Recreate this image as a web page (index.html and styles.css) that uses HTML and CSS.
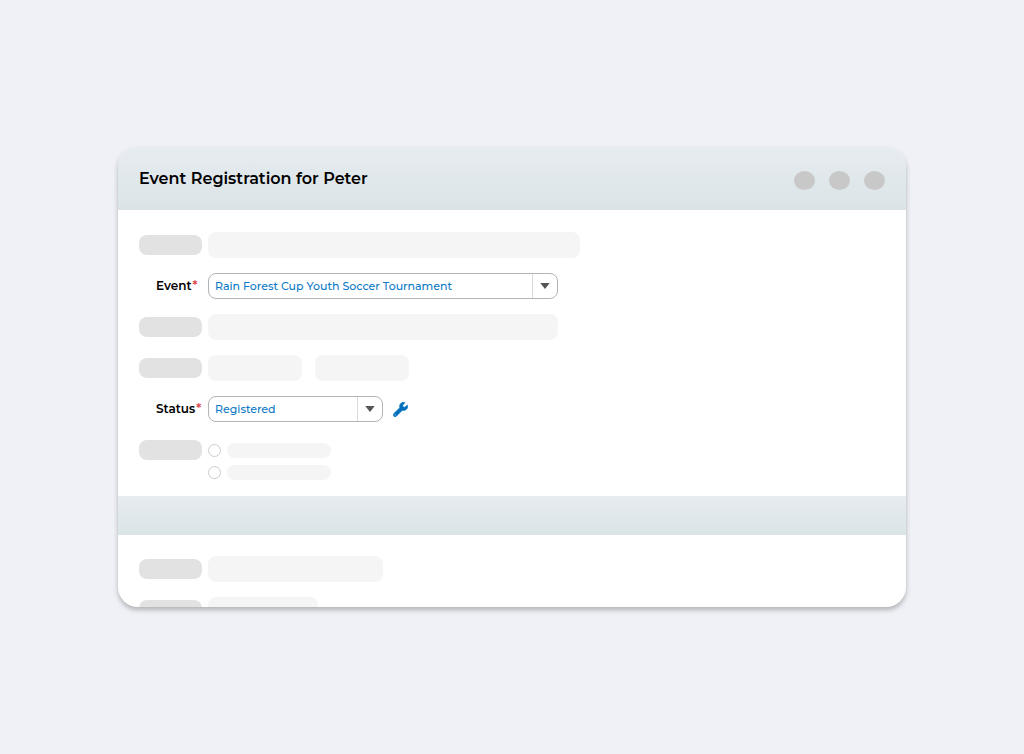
FILE: index.html
```html
<!DOCTYPE html>
<html lang="en">
<head>
    <meta charset="UTF-8">
    <meta name="viewport" content="width=device-width, initial-scale=1.0">
    <title>Event Registration for Peter</title>
    <link rel="stylesheet" href="styles.css">
</head>
<body>
    <main class="card">
        <header class="card-header">
            <h1>Event Registration for Peter</h1>
            <div class="dots">
                <span class="dot"></span>
                <span class="dot"></span>
                <span class="dot"></span>
            </div>
        </header>

        <form class="fields">
            <div class="row">
                <span class="label-bar"></span>
                <span class="bar bar-xl"></span>
            </div>
            <div class="row">
                <label for="event">Event<span class="required">*</span></label>
                <div class="dropdown dropdown-event">
                    <select id="event">
                        <option>Rain Forest Cup Youth Soccer Tournament</option>
                    </select>
                    <span class="arrow"><svg width="10" height="6" viewBox="0 0 10 6"><path d="M0.3 0h9.4L5 6z" fill="#555"/></svg></span>
                </div>
            </div>
            <div class="row">
                <span class="label-bar"></span>
                <span class="bar bar-lg"></span>
            </div>
            <div class="row">
                <span class="label-bar"></span>
                <div class="pair">
                    <span class="bar bar-xs"></span>
                    <span class="bar bar-xs"></span>
                </div>
            </div>
            <div class="row">
                <label for="status">Status<span class="required">*</span></label>
                <div class="dropdown dropdown-status">
                    <select id="status">
                        <option>Registered</option>
                    </select>
                    <span class="arrow"><svg width="10" height="6" viewBox="0 0 10 6"><path d="M0.3 0h9.4L5 6z" fill="#555"/></svg></span>
                </div>
                <button type="button" class="tool" aria-label="Edit status">
                    <svg width="15" height="15" viewBox="-12 -12 536 536"><path fill="#0070bd" stroke="#0070bd" stroke-width="24" d="M507.700 109.100c-2.200-9-13.500-12.100-20.100-5.500l-74.400 74.400-67.900-11.300L334 98.900l74.400-74.400c6.600-6.600 3.400-17.900-5.700-20.200-47.400-11.700-99.600.9-136.600 37.900-39.600 39.600-50.500 97.100-34.100 147.200L18.700 402.800c-25 25-25 65.500 0 90.500s65.500 25 90.500 0l213.200-213.200c50.100 16.700 107.500 5.700 147.400-34.200 37.100-37.100 49.700-89.300 37.900-136.800zM64 476c-15 0-28-13-28-28s13-28 28-28 28 13 28 28-13 28-28 28z"/></svg>
                </button>
            </div>
            <div class="row">
                <span class="label-bar"></span>
                <div class="radios">
                    <label class="option"><input type="radio" name="choice" aria-label="First option"><span class="option-bar"></span></label>
                    <label class="option"><input type="radio" name="choice" aria-label="Second option"><span class="option-bar"></span></label>
                </div>
            </div>
        </form>

        <div class="divider"></div>

        <section class="fields fields-cut">
            <div class="row">
                <span class="label-bar"></span>
                <span class="bar bar-md"></span>
            </div>
            <div class="row">
                <span class="label-bar"></span>
                <span class="bar bar-sm"></span>
            </div>
        </section>
    </main>
</body>
</html>
```

FILE: styles.css
```css
* {
    box-sizing: border-box;
}
body {
    margin: 0;
    min-height: 100vh;
    padding: 20px;
    display: flex;
    align-items: center;
    justify-content: center;
    background-color: #f0f1f6;
    font-family: Montserrat, Inter, sans-serif;
    font-size: 12px;
    font-weight: 500;
    color: #000;
}
.card {
    width: 100%;
    max-width: 788px;
    background: white;
    border-radius: 20px;
    box-shadow: 0 3px 5px rgba(0,0,0,0.26);
    overflow: hidden;
}
.card-header, .divider {
    background: linear-gradient(#e7ecf0, #dae4e6);
}
.card-header {
    display: flex;
    align-items: center;
    justify-content: space-between;
    padding: 20px 21px;
}
h1 {
    margin: 0;
    font-size: 16px;
    line-height: 23px;
    font-weight: 600;
}
.dots {
    display: flex;
    gap: 14px;
    padding-top: 4px;
}
.dot {
    width: 21px;
    height: 19px;
    border-radius: 50%;
    background: #c8c8c8;
}
.divider {
    height: 39px;
}

/* form rows */
.fields {
    display: flex;
    flex-direction: column;
    gap: 15px;
    padding: 22px 21px 16px;
}
.fields-cut {
    max-height: 72px;
    padding-top: 21px;
    overflow: hidden;
}
.row {
    display: flex;
    align-items: flex-start;
    gap: 6px;
}
.row > label {
    width: 63px;
    padding-left: 17px;
    line-height: 26px;
    font-weight: 600;
    white-space: nowrap;
}
.required {
    color: #e0484f;
    margin-left: 1px;
}
.label-bar {
    width: 63px;
    height: 20px;
    margin: 3px 0;
    border-radius: 8px;
    background: #e2e2e2;
}
.bar {
    height: 26px;
    border-radius: 8px;
    background: #f5f5f5;
}
.bar-xl { width: 372px; }
.bar-lg { width: 350px; }
.bar-md { width: 175px; }
.bar-sm { width: 110px; }
.bar-xs { width: 94px; }
.pair {
    display: flex;
    gap: 13px;
}

/* dropdowns */
.dropdown {
    display: grid;
    height: 26px;
    border: 1px solid #b4b4b4;
    border-radius: 8px;
}
.dropdown-event { width: 350px; }
.dropdown-status { width: 175px; }
.dropdown select, .arrow {
    grid-area: 1 / 1;
}
.dropdown select {
    appearance: none;
    width: 100%;
    padding: 0 30px 0 6px;
    border: none;
    border-radius: 8px;
    background: none;
    font: inherit;
    font-size: 11px;
    color: #0b79c5;
}
.arrow {
    display: flex;
    align-items: center;
    justify-content: center;
    justify-self: end;
    width: 25px;
    border-left: 1px solid #dadada;
    pointer-events: none;
}
.tool {
    display: flex;
    align-items: center;
    height: 26px;
    padding: 0 4px;
    border: none;
    background: none;
    cursor: pointer;
}

/* radio list */
.radios {
    display: flex;
    flex-direction: column;
    gap: 7px;
    padding-top: 6px;
}
.option {
    display: flex;
    align-items: center;
    gap: 6px;
}
.option input {
    appearance: none;
    width: 13px;
    height: 13px;
    margin: 0;
    border: 1px solid #ccc;
    border-radius: 50%;
}
.option input:checked {
    background: #0b79c5;
}
.option-bar {
    width: 104px;
    height: 15px;
    border-radius: 8px;
    background: #f5f5f5;
}
```
